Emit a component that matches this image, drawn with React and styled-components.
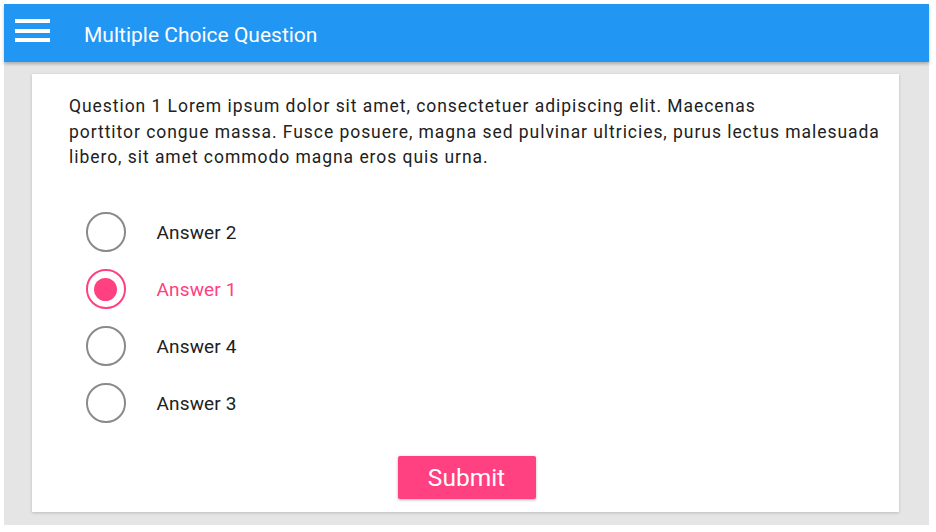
import React, { useState } from "react";
import styled, { createGlobalStyle } from "styled-components";

const GlobalStyle = createGlobalStyle`
  html, body {
    margin: 0;
    padding: 0;
    background: #fff;
  }
  body {
    font-family: Roboto, "Liberation Sans", sans-serif;
  }
`;

const Screen = styled.div`
  margin: 4px 0 0 4px;
  width: 925px;
  height: 521px;
  background: #e5e5e5;
  display: flex;
  flex-direction: column;
`;

const AppBar = styled.header`
  height: 58px;
  flex-shrink: 0;
  background: #2196f3;
  display: flex;
  align-items: center;
  box-shadow: 0 2px 3px rgba(0, 0, 0, 0.25);
  position: relative;
  z-index: 1;
`;

const MenuButton = styled.button`
  width: 35px;
  margin: 15px 0 0 11px;
  align-self: flex-start;
  padding: 0;
  border: 0;
  background: transparent;
  display: flex;
  flex-direction: column;
  gap: 5.5px;
  cursor: pointer;

  span {
    display: block;
    height: 4px;
    background: #fff;
  }
`;

const Title = styled.h1`
  margin: 3px 0 0 34px;
  font-size: 21px;
  font-weight: 400;
  color: #fff;
`;

const Body = styled.main`
  flex: 1;
  padding: 12px 30px 13px 28px;
  display: flex;
`;

const Card = styled.section`
  flex: 1;
  background: #fff;
  box-shadow: 0 1px 3px rgba(0, 0, 0, 0.18);
  padding: 20px 0 0 37px;
  display: flex;
  flex-direction: column;
`;

const Question = styled.p`
  margin: 0;
  font-size: 17.5px;
  letter-spacing: 0.95px;
  line-height: 25.5px;
  color: #212121;
  max-width: 830px;
`;

const Options = styled.div`
  margin-top: 41px;
  display: flex;
  flex-direction: column;
  gap: 16px;
`;

const Option = styled.label`
  display: flex;
  align-items: center;
  height: 41px;
  cursor: pointer;
  padding-left: 17px;
`;

const Ring = styled.span`
  width: 35.5px;
  height: 35.5px;
  border-radius: 50%;
  border: 2.5px solid ${(p) => (p.$on ? "#ff4081" : "#8a8a8a")};
  display: flex;
  align-items: center;
  justify-content: center;
  flex-shrink: 0;

  &::after {
    content: "";
    width: 23px;
    height: 23px;
    border-radius: 50%;
    background: #ff4081;
    display: ${(p) => (p.$on ? "block" : "none")};
  }
`;

const Label = styled.span`
  margin-left: 31px;
  font-size: 19px;
  letter-spacing: 0.15px;
  color: ${(p) => (p.$on ? "#ff4081" : "#212121")};
`;

const Footer = styled.div`
  margin-top: 32px;
  display: flex;
  justify-content: center;
  padding-right: 35px;
`;

const SubmitButton = styled.button`
  width: 138px;
  height: 43px;
  border: 0;
  border-radius: 2px;
  background: #ff4081;
  color: #fff;
  font-family: Roboto, "Liberation Sans", sans-serif;
  font-size: 24.5px;
  box-shadow: 0 1px 3px rgba(0, 0, 0, 0.3);
  cursor: pointer;
`;

const answers = ["Answer 2", "Answer 1", "Answer 4", "Answer 3"];

export default function App() {
  const [picked, setPicked] = useState("Answer 1");

  return (
    <>
      <GlobalStyle />
      <Screen>
        <AppBar>
          <MenuButton aria-label="menu">
            <span />
            <span />
            <span />
          </MenuButton>
          <Title>Multiple Choice Question</Title>
        </AppBar>
        <Body>
          <Card>
            <Question>
              Question 1 Lorem ipsum dolor sit amet, consectetuer adipiscing elit. Maecenas
              <br />
              porttitor congue massa. Fusce posuere, magna sed pulvinar ultricies, purus lectus malesuada
              libero, sit amet commodo magna eros quis urna.
            </Question>
            <Options>
              {answers.map((a) => (
                <Option key={a} onClick={() => setPicked(a)}>
                  <Ring $on={picked === a} />
                  <Label $on={picked === a}>{a}</Label>
                </Option>
              ))}
            </Options>
            <Footer>
              <SubmitButton>Submit</SubmitButton>
            </Footer>
          </Card>
        </Body>
      </Screen>
    </>
  );
}
